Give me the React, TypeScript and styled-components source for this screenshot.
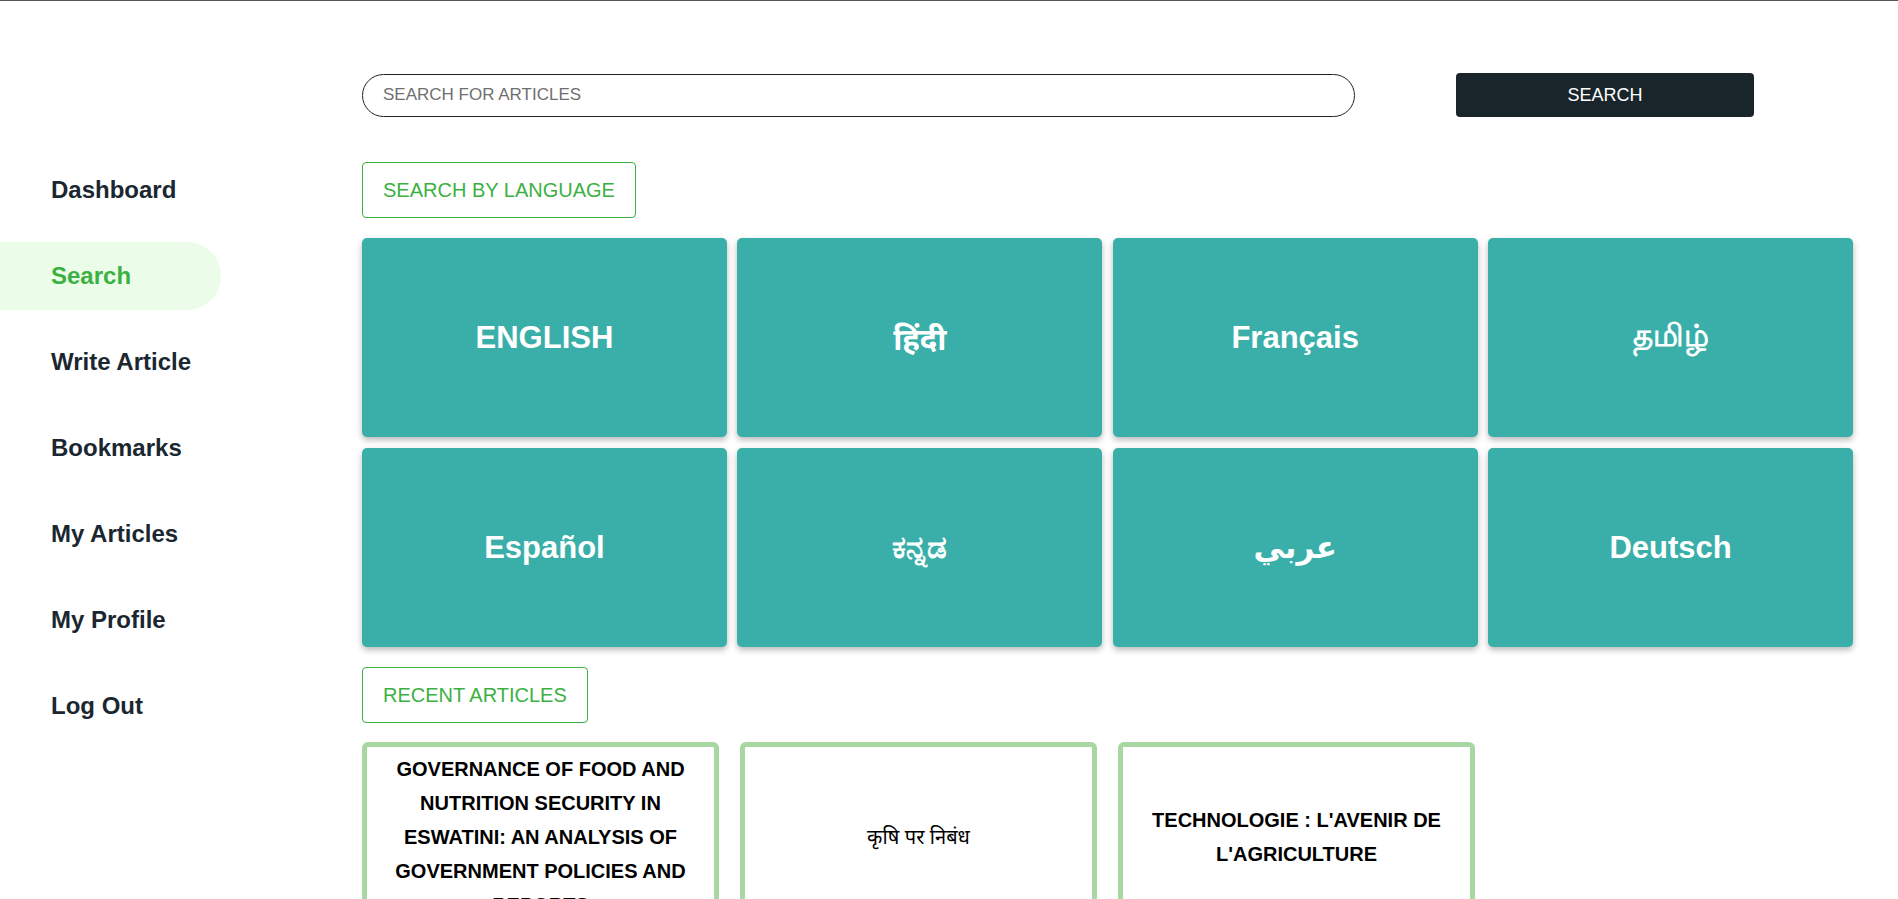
import styled, { createGlobalStyle } from "styled-components";

const GlobalStyle = createGlobalStyle`
  html, body {
    margin: 0;
    padding: 0;
    background: #ffffff;
  }
  body {
    font-family: "Liberation Sans", Arial, "Noto Sans", sans-serif;
    border-top: 1px solid #555555;
  }
  * {
    box-sizing: border-box;
  }
`

const Page = styled.div`
  display: flex;
  min-height: 898px;
`

const Sidebar = styled.nav`
  width: 362px;
  flex-shrink: 0;
  display: flex;
  flex-direction: column;
  gap: 18px;
  padding-top: 155px;
`

const NavItem = styled.a<{ active?: boolean }>`
  width: 221px;
  height: 68px;
  display: flex;
  align-items: center;
  padding-left: 51px;
  font-size: 24px;
  font-weight: 700;
  text-decoration: none;
  cursor: pointer;
  color: ${props => props.active ? "#3bb143" : "#1b2730"};
  background: ${props => props.active ? "#ebfde9" : "transparent"};
  border-radius: 0 34px 34px 0;
`

const Main = styled.main`
  width: 1491px;
  padding-top: 72px;
  display: flex;
  flex-direction: column;
`

const SearchRow = styled.div`
  display: flex;
  align-items: center;
  height: 44px;
`

const SearchInput = styled.input`
  width: 993px;
  height: 43px;
  border: 1px solid #1b252b;
  border-radius: 22px;
  padding: 0 20px;
  font-family: "Liberation Sans", Arial, sans-serif;
  font-size: 17px;
  outline: none;

  &::placeholder {
    color: #6f6f6f;
  }
`

const SearchButton = styled.button`
  margin-left: 101px;
  width: 298px;
  height: 44px;
  border: none;
  border-radius: 4px;
  background: #1a252b;
  color: #ffffff;
  font-family: "Liberation Sans", Arial, sans-serif;
  font-size: 18px;
  cursor: pointer;
`

const SectionLabel = styled.div<{ top: number }>`
  align-self: flex-start;
  margin-top: ${props => props.top}px;
  margin-bottom: 20px;
  height: 56px;
  padding: 0 20px;
  display: flex;
  align-items: center;
  border: 1px solid #3bb143;
  border-radius: 4px;
  color: #3bb143;
  font-size: 20px;
`

const LanguageGrid = styled.div`
  display: grid;
  grid-template-columns: repeat(4, 1fr);
  grid-auto-rows: 199px;
  gap: 11px 10.5px;
`

const LanguageCard = styled.div`
  background: #3aafa9;
  border-radius: 5px;
  box-shadow: 0 3px 6px rgba(0, 0, 0, 0.28);
  display: flex;
  align-items: center;
  justify-content: center;
  color: #ffffff;
  font-size: 31px;
  font-weight: 700;
  font-family: "Liberation Sans", Arial, "Noto Sans", "DejaVu Sans", sans-serif;
  cursor: pointer;
`

const ArticleRow = styled.div`
  display: flex;
  gap: 21px;
  margin-top: -1px;
`

const ArticleCard = styled.div<{ plain?: boolean }>`
  width: 357px;
  height: 190px;
  flex-shrink: 0;
  border: 5px solid #a8d7a3;
  border-radius: 6px;
  display: flex;
  align-items: center;
  justify-content: center;
  padding: 0 22px;
  text-align: center;
  font-size: 20px;
  font-weight: ${props => props.plain ? 400 : 700};
  line-height: 34px;
  color: #000000;
`

const languages = ["ENGLISH", "हिंदी", "Français", "தமிழ்", "Español", "ಕನ್ನಡ", "عربي", "Deutsch"];

const navItems = ["Dashboard", "Search", "Write Article", "Bookmarks", "My Articles", "My Profile", "Log Out"];

const articles = [
  "GOVERNANCE OF FOOD AND NUTRITION SECURITY IN ESWATINI: AN ANALYSIS OF GOVERNMENT POLICIES AND REPORTS",
  "कृषि पर निबंध",
  "TECHNOLOGIE : L'AVENIR DE L'AGRICULTURE",
];

export default function App() {
  return <>
    <GlobalStyle />
    <Page>
      <Sidebar>
        {navItems.map(item => <NavItem key={item} active={item === "Search"}>{item}</NavItem>)}
      </Sidebar>
      <Main>
        <SearchRow>
          <SearchInput placeholder="SEARCH FOR ARTICLES" />
          <SearchButton>SEARCH</SearchButton>
        </SearchRow>
        <SectionLabel top={45}>SEARCH BY LANGUAGE</SectionLabel>
        <LanguageGrid>
          {languages.map(lang => <LanguageCard key={lang}>{lang}</LanguageCard>)}
        </LanguageGrid>
        <SectionLabel top={20}>RECENT ARTICLES</SectionLabel>
        <ArticleRow>
          {articles.map(title => (
            <ArticleCard key={title} plain={!/[A-Z]/.test(title)}>{title}</ArticleCard>
          ))}
        </ArticleRow>
      </Main>
    </Page>
  </>
}
